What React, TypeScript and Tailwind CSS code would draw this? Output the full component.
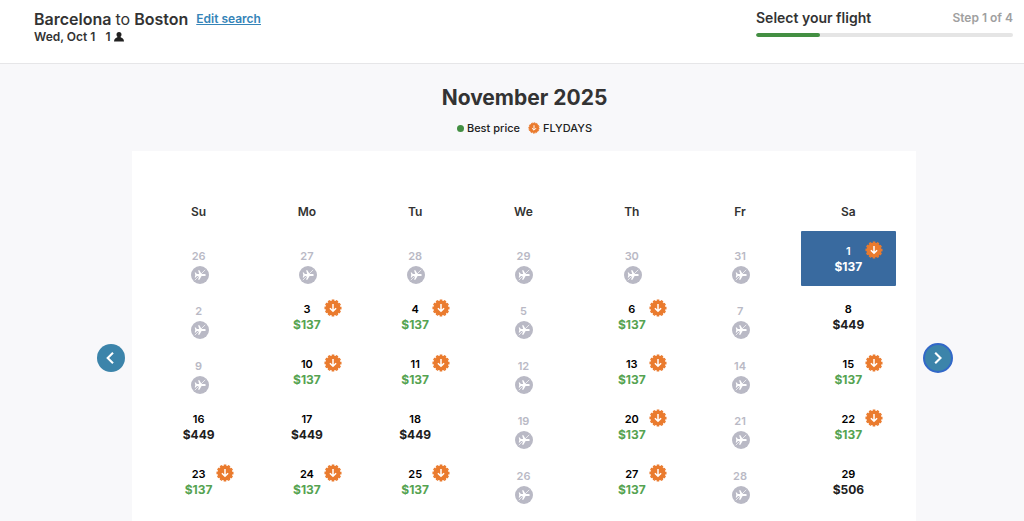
import React from "react";

type Day = { date: number; price?: number; fly?: boolean; selected?: boolean };

const weekdays = ["Su", "Mo", "Tu", "We", "Th", "Fr", "Sa"];

const off = (date: number): Day => ({ date });
const best = (date: number): Day => ({ date, price: 137, fly: true });
const fare = (date: number, price: number): Day => ({ date, price });

const weeks: Day[][] = [
  [off(26), off(27), off(28), off(29), off(30), off(31), { ...best(1), selected: true }],
  [off(2), best(3), best(4), off(5), best(6), off(7), fare(8, 449)],
  [off(9), best(10), best(11), off(12), best(13), off(14), best(15)],
  [fare(16, 449), fare(17, 449), fare(18, 449), off(19), best(20), off(21), best(22)],
  [best(23), best(24), best(25), off(26), best(27), off(28), fare(29, 506)],
];

function FlydaysBadge({ className }: { className: string }) {
  return (
    <svg viewBox="0 0 18 18" className={className} aria-hidden="true">
      <circle cx="9" cy="9" r="7.6" fill="#ea7b2e" />
      <circle cx="9" cy="9" r="7.8" fill="none" stroke="#ea7b2e" strokeWidth="1.5" pathLength="24" strokeDasharray="1.25 0.75" strokeDashoffset="0.6" />
      <path d="M9 4.9v7.2M5.9 9.2 9 12.3l3.1-3.1" fill="none" stroke="#fff" strokeWidth="1.5" />
    </svg>
  );
}

function NoFlightIcon() {
  return (
    <svg viewBox="0 0 18 18" className="ml-0.5 size-[18px]" aria-hidden="true">
      <circle cx="9" cy="9" r="9" fill="#b9b9c5" />
      <path
        fill="#fff"
        d="M14.800 9c0 .7-.6 1.100-1.300 1.100H10.600L8.400 13.800H7.100L8.200 10.100H5.800L4.800 11.500H3.700L4.300 9 3.700 6.500H4.800L5.800 7.900H8.200L7.100 4.200H8.400L10.600 7.900H13.500c.7 0 1.300.4 1.300 1.100Z"
      />
      <path d="M3.800 14.200 14.200 3.800" stroke="#fff" strokeWidth=".7" />
    </svg>
  );
}

function DayCell({ day }: { day: Day }) {
  if (day.price === undefined) {
    return (
      <button type="button" disabled className="flex h-[55px] w-full flex-col items-center gap-0.5 pt-[17px] text-[11px] leading-4 font-semibold text-[#b9b9c5]">
        <span>{day.date}</span>
        <NoFlightIcon />
      </button>
    );
  }
  const box = day.selected ? "bg-[#396a9f] pt-3 text-white" : "pt-[15px] text-black";
  const priceColor = day.selected ? "text-white" : day.fly ? "text-[#55a351]" : "text-[#202020]";
  return (
    <button type="button" aria-pressed={!!day.selected} className={`flex h-[55px] w-full flex-col items-center rounded-[1px] font-semibold ${box}`}>
      <span className="relative flex w-full justify-center text-[11px] leading-4">
        {day.date}
        {day.fly && <FlydaysBadge className="absolute -top-0.5 left-1/2 ml-[17px] size-[18px]" />}
      </span>
      <span className={`text-xs leading-4 font-bold ${priceColor}`}>${day.price}</span>
    </button>
  );
}

function Arrow({ next }: { next?: boolean }) {
  return (
    <button
      type="button"
      aria-label={next ? "Next month" : "Previous month"}
      className={`flex shrink-0 items-center justify-center rounded-full bg-[#3c84aa] ${next ? "size-[30px] border-2 border-[#3268c8]" : "size-7"}`}
    >
      <svg viewBox="0 0 16 16" className="size-4" fill="none" stroke="#fff" strokeWidth="2.1" aria-hidden="true">
        <path d={next ? "M5.2 2.8 10.500 8l-5.300 5.200" : "M10 2.800 4.700 8l5.300 5.200"} />
      </svg>
    </button>
  );
}

export default function App() {
  return (
    <div className="h-screen overflow-hidden bg-[#f8f8fa] font-[Inter,'Liberation_Sans',sans-serif] text-[#333]">
      <header className="flex h-16 items-start justify-between border-b border-[#e6e6e8] bg-white pr-[11px] pl-[34px]">
        <div className="pt-2.5">
          <div className="flex items-center gap-2">
            <h1 className="text-base leading-[18px] font-semibold">
              Barcelona <span className="font-normal">to</span> Boston
            </h1>
            <a href="#search" className="text-xs leading-[18px] font-semibold text-[#3584b8] underline">
              Edit search
            </a>
          </div>
          <div className="flex items-center gap-2.5 text-xs leading-[18px] font-semibold">
            <span>Wed, Oct 1</span>
            <span className="flex items-center gap-1">
              1
              <svg viewBox="0 0 10 10" className="size-2.5" fill="#222" aria-label="passenger">
                <path d="M5 0a2.5 2.5 0 0 1 2.5 2.5c0 1.1-.5 2-1.1 2.6L8.800 6.500Q10 7.300 10 9.500H0Q0 7.300 1.200 6.500L3.600 5.100C3 4.500 2.500 3.600 2.500 2.500A2.500 2.500 0 0 1 5 0Z" />
              </svg>
            </span>
          </div>
        </div>
        <div className="w-1/4 min-w-[257px] pt-[9px]">
          <div className="flex items-center justify-between">
            <span className="text-sm leading-[18px] font-semibold">Select your flight</span>
            <span className="text-xs leading-[18px] font-semibold text-[#a0a0a0]">Step 1 of 4</span>
          </div>
          <div className="mt-1.5 h-1 overflow-hidden rounded-full bg-[#e5e5e5]">
            <div className="h-full w-1/4 rounded-full bg-[#438f42]" />
          </div>
        </div>
      </header>

      <main className="pt-5 pl-[25px]">
        <h2 className="text-center text-[21px] leading-7 font-bold">November 2025</h2>
        <div className="mt-2 flex items-center justify-center gap-2 text-[11px] leading-4 font-medium text-[#222]">
          <span className="flex items-center gap-[3px]">
            <span className="size-[7px] rounded-full bg-[#438f42]" />
            Best price
          </span>
          <span className="flex items-center gap-[3px]">
            <FlydaysBadge className="size-3" />
            FLYDAYS
          </span>
        </div>

        <div className="mx-auto mt-[15px] flex max-w-[856px] items-center justify-between gap-[7px]">
          <Arrow />
          <section className="min-w-0 flex-1 bg-white px-[13px] pt-[53px] pb-[59px]">
            <table className="w-full table-fixed border-collapse">
              <thead>
                <tr>
                  {weekdays.map((name) => (
                    <th key={name} scope="col" className="px-0 pt-0 pb-[11px] text-center text-xs leading-4 font-semibold">
                      {name}
                    </th>
                  ))}
                </tr>
              </thead>
              <tbody>
                {weeks.map((week, i) => (
                  <tr key={i}>
                    {week.map((day) => (
                      <td key={day.date} className="px-[7px] py-0">
                        <DayCell day={day} />
                      </td>
                    ))}
                  </tr>
                ))}
              </tbody>
            </table>
          </section>
          <Arrow next />
        </div>
      </main>
    </div>
  );
}
